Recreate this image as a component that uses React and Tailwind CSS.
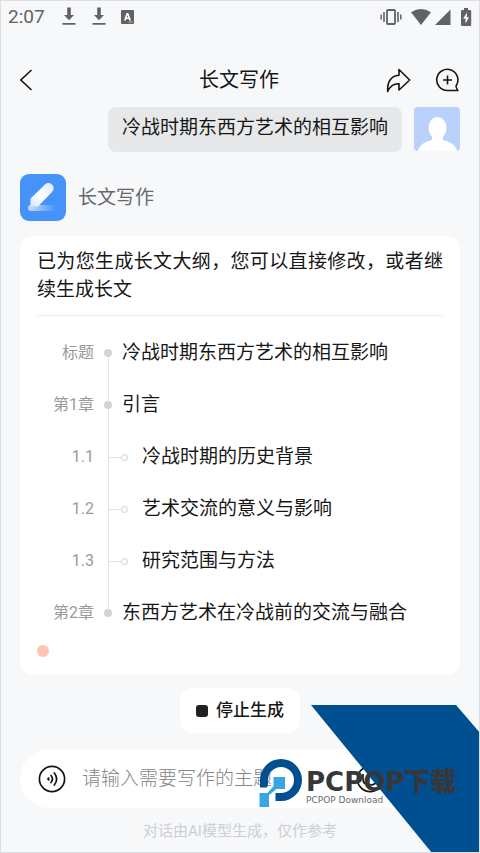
import React from 'react';

const outline = [
  { id: '标题', text: '冷战时期东西方艺术的相互影响', level: 0 },
  { id: '第1章', text: '引言', level: 0 },
  { id: '1.1', text: '冷战时期的历史背景', level: 1 },
  { id: '1.2', text: '艺术交流的意义与影响', level: 1 },
  { id: '1.3', text: '研究范围与方法', level: 1 },
  { id: '第2章', text: '东西方艺术在冷战前的交流与融合', level: 0 },
];

function DownloadIcon() {
  return (
    <svg width="14" height="20" viewBox="0 0 14 20" fill="#616264" aria-hidden="true">
      <path d="M5.2 0.500h3.600v7.500h3.200L7 13.200 2 8h3.200zM.5 16h13v1.700H.5z" />
    </svg>
  );
}

function StatusBar() {
  return (
    <div className="flex h-8 items-center justify-between px-[7px] text-[#616264]">
      <div className="flex items-center">
        <span className="w-[54px] text-[19px] leading-6">2:07</span>
        <DownloadIcon />
        <span className="w-4" />
        <DownloadIcon />
        <svg className="ml-[15px]" width="13" height="14" viewBox="0 0 13 14" aria-hidden="true">
          <rect width="13" height="14" rx="1" fill="#616264" />
          <path d="M3 10.500L5.500 3h1.800l2.800 7.500H8.200L7.700 9H5.300l-.5 1.500zM5.800 7.500h1.500L6.600 5.200z" fill="#fff" />
          <path d="M7.500 12h4" stroke="#bbb" />
        </svg>
      </div>
      <div className="flex items-center">
        <svg width="22" height="18" viewBox="0 0 22 18" fill="none" stroke="#616264" aria-hidden="true">
          <rect x="7" y="2" width="8" height="14" rx="1" strokeWidth="1.8" />
          <path d="M4 4v10M18 4v10" strokeWidth="1.6" />
          <path d="M1.200 6.500v5M20.800 6.500v5" strokeWidth="1.500" />
        </svg>
        <svg className="ml-2" width="22" height="18" viewBox="0 0 22 18" fill="#616264" aria-hidden="true">
          <path d="M1 4.200Q11-2.200 21 4.200L11 17z" />
        </svg>
        <svg className="ml-[3px]" width="16" height="18" viewBox="0 0 16 18" fill="#616264" aria-hidden="true">
          <path d="M15.500 1.500V17H0z" />
        </svg>
        <svg className="ml-[9px]" width="12" height="18" viewBox="0 0 12 18" aria-hidden="true">
          <path d="M4 0h4v2h2q1.200 0 1.200 1.200v13.600Q11.200 18 10 18H2.200Q1 18 1 16.800V3.200Q1 2 2.200 2H4z" fill="#616264" />
          <path d="M7 4.500L3.200 10.500h2.300V15.500L9 9.200H6.700z" fill="#fff" />
        </svg>
      </div>
    </div>
  );
}

function Header() {
  return (
    <header className="mt-[23px] grid h-12 grid-cols-[1fr_auto_1fr] items-center pl-[18px] pr-5">
      <button type="button" aria-label="返回" className="justify-self-start">
        <svg width="14" height="24" viewBox="0 0 14 24" fill="none" stroke="#151515" strokeWidth="1.6">
          <path d="M12.500 2L1.800 12l10.700 10" />
        </svg>
      </button>
      <h1 className="text-[20px] leading-6 text-[#151515]">长文写作</h1>
      <div className="flex items-center gap-6 justify-self-end">
        <button type="button" aria-label="分享">
          <svg width="26" height="26" viewBox="0 0 26 26" fill="none" stroke="#151515" strokeWidth="1.600" strokeLinejoin="round">
            <path d="M14 2.500L24.700 13 14 23v-6.200C9 16.500 5 19.500 2.700 24.500 2 15.500 5.500 8.800 14 8.200z" />
          </svg>
        </button>
        <button type="button" aria-label="新建对话">
          <svg width="24" height="26" viewBox="0 0 24 26" fill="none" stroke="#151515" strokeWidth="1.600" strokeLinejoin="round">
            <path d="M12.500 23.500A10.600 10.600 0 1 1 21.300 18.500Q20.500 19.800 22.800 23.500zM12.500 8.500v9M8 13h9" />
          </svg>
        </button>
      </div>
    </header>
  );
}

function OutlineRow({ item }) {
  return (
    <li className="flex h-[52px] items-center">
      <span className="w-[57px] shrink-0 text-right text-[16px] text-[#999a9c]">{item.id}</span>
      {item.level === 0 ? (
        <>
          <span className="ml-[10px] mr-[10px] size-2 shrink-0 rounded-full bg-[#d4d4d4]" />
          <span>{item.text}</span>
        </>
      ) : (
        <>
          <span className="ml-[14px] h-px w-[13px] shrink-0 bg-[#e4e4e4]" />
          <span className="mr-[14px] size-[7px] shrink-0 rounded-full border border-[#cfcfcf] bg-white" />
          <span>{item.text}</span>
        </>
      )}
    </li>
  );
}

function Watermark() {
  return (
    <div className="pointer-events-none absolute -bottom-px -right-px h-[148px] w-[222px]">
      <svg className="absolute inset-0" width="222" height="148" viewBox="258 705 222 148" aria-hidden="true">
        <path d="M311 705H456L480 733V853H432z" fill="#004f91" />
        <path d="M260 787.500V780A21 21 0 1 1 281 801H275.500V793H281A13 13 0 1 0 268 780Q268.500 784 267 787.500z" fill="#004f91" />
        <path d="M273.500 777H285V789H276.500L269 795V807H259.500V793H267.500L273.500 786z" fill="#38a6e3" />
      </svg>
      <div className="absolute left-[48px] top-[64px] whitespace-nowrap text-[#373737]">
        <div className="font-['DejaVu_Sans','Noto_Sans_CJK_SC',sans-serif] text-[26px] font-bold leading-[26px]">PCPOP<span className="font-black">下载</span></div>
        <div className="font-['DejaVu_Sans',sans-serif] text-[9px] leading-[10px] text-[#66696d]">PCPOP Download</div>
      </div>
    </div>
  );
}

export default function App() {
  return (
    <div className="relative flex min-h-screen flex-col overflow-hidden border border-[#dddee1] bg-[#f6f8fa] font-['Roboto','Noto_Sans_CJK_SC',sans-serif] text-[19px] text-[#171717]">
      <StatusBar />
      <Header />
      <main className="flex flex-col px-[19px]">
        <div className="mt-[3px] flex items-start justify-end gap-3">
          <p className="flex h-[45px] items-center rounded-lg bg-[#e7e8ea] px-[14px] pb-[2px]">冷战时期东西方艺术的相互影响</p>
          <svg width="46" height="44" viewBox="0 0 46 44" role="img" aria-label="用户头像">
            <defs>
              <clipPath id="avatar-shape"><rect width="46" height="44" rx="4" /></clipPath>
            </defs>
            <g clipPath="url(#avatar-shape)">
              <rect width="46" height="44" fill="#bad1fc" />
              <ellipse cx="23.500" cy="21" rx="9" ry="11" fill="#fff" />
              <path d="M18 28h11v5Q40 35 43.500 44H3.500Q7 35 18 33z" fill="#fff" />
            </g>
          </svg>
        </div>
        <div className="mt-[22px] flex items-center gap-3">
          <svg width="46" height="47" viewBox="0 0 46 47" aria-hidden="true">
            <defs>
              <linearGradient id="pen" x1="0" y1="1" x2="1" y2="0">
                <stop offset="0" stopColor="#d6e6ff" />
                <stop offset=".45" stopColor="#fff" />
                <stop offset="1" stopColor="#dceaff" />
              </linearGradient>
              <linearGradient id="trail">
                <stop offset="0" stopColor="#c5dcff" />
                <stop offset="1" stopColor="#4b94f8" />
              </linearGradient>
            </defs>
            <rect width="46" height="47" rx="9" fill="#4593f9" />
            <rect x="8" y="31" width="28" height="6" rx="3" fill="url(#trail)" />
            <path d="M10.500 32.500V24.500L25 10.500Q29 7.500 32.500 11 35 14.500 32 18L18 32.500z" fill="url(#pen)" />
          </svg>
          <span className="pt-[2px] text-[#66686b]">长文写作</span>
        </div>
        <section className="mt-[15px] rounded-xl bg-white px-[17px] pt-3">
          <p className="border-b border-[#ebebec] pb-[11px] text-justify leading-7">已为您生成长文大纲，您可以直接修改，或者继续生成长文</p>
          <div className="relative mt-[11px]">
            <span className="absolute bottom-[26px] left-[71px] top-[26px] w-px bg-[#e4e4e4]" />
            <ol className="relative">
              {outline.map((item) => <OutlineRow key={item.id} item={item} />)}
            </ol>
          </div>
          <div className="flex h-[35px] pt-[6px]">
            <span className="size-3 rounded-full bg-[#fec5ae]" />
          </div>
        </section>
        <button type="button" className="mt-[14px] flex h-[45px] w-[120px] items-center justify-center gap-2 self-center rounded-xl bg-white text-[17px] font-medium">
          <span className="size-3 rounded-[3px] bg-[#202020]" />
          停止生成
        </button>
        <form className="mt-4 flex h-[59px] items-center rounded-full bg-white pl-[18px]" onSubmit={(event) => event.preventDefault()}>
          <button type="button" aria-label="语音播报">
            <svg width="28" height="28" viewBox="0 0 28 28" fill="none" stroke="#151515" strokeWidth="1.700" strokeLinecap="round">
              <circle cx="14" cy="14" r="12.600" />
              <path d="M8.800 14L11 11.800Q12.300 14 11 16.200z" fill="#151515" stroke="none" />
              <path d="M13 10.500Q16 14 13 17.500M16.300 8Q21 14 16.300 20" />
            </svg>
          </button>
          <input aria-label="写作主题" placeholder="请输入需要写作的主题" className="ml-4 h-10 min-w-0 flex-1 bg-transparent outline-none placeholder:font-light placeholder:text-[#858688]" />
          <button type="button" aria-label="更多功能" className="mr-[76px]">
            <svg width="28" height="28" viewBox="0 0 28 28" fill="none" stroke="#151515" strokeWidth="1.700">
              <circle cx="14" cy="14" r="12.600" />
              <path d="M7 9v5q0 6 7 6t7-6V9" />
            </svg>
          </button>
        </form>
        <p className="mt-[11px] pb-2 text-center text-[15px] leading-6 text-[#cdcfd2]">对话由AI模型生成，仅作参考</p>
      </main>
      <Watermark />
    </div>
  );
}
